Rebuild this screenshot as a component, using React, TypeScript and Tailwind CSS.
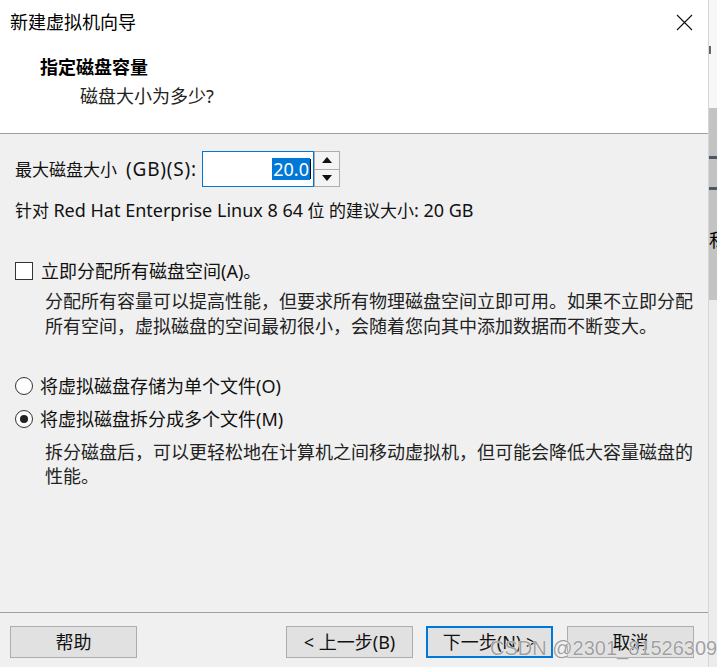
import React from "react";

const FONT = { fontFamily: '"Noto Sans", "Noto Sans CJK SC", sans-serif' };

function Btn({ children, primary }: { children: React.ReactNode; primary?: boolean }) {
  return (
    <div
      className={
        "w-[127px] h-[32px] flex items-center justify-center bg-[#e1e1e1] text-[18px] text-[#111] " +
        (primary ? "border-2 border-[#0078d7]" : "border border-[#adadad]")
      }
    >
      {children}
    </div>
  );
}

export default function App() {
  return (
    <div className="w-[717px] h-[667px] flex overflow-hidden relative" style={FONT}>
      <div className="w-[709px] h-full flex flex-col bg-[#f0f0f0] border-r border-[#d6d6d6]">
        {/* header */}
        <div className="h-[134px] bg-white border-b border-[#a0a0a0] flex flex-col pt-[10px] pl-[10px]">
          <div className="h-[24px] flex items-center justify-between pr-[15px]">
            <span className="text-[18px] leading-[24px] text-black">新建虚拟机向导</span>
            <svg width="17" height="17" viewBox="0 0 17 17">
              <path d="M1 1 L16 16 M16 1 L1 16" stroke="#111" strokeWidth="1.1" fill="none" />
            </svg>
          </div>
          <div className="mt-[21px] pl-[30px] text-[18px] leading-[24px] font-bold text-black">指定磁盘容量</div>
          <div className="mt-[5px] pl-[70px] text-[18px] leading-[24px] text-[#222]">磁盘大小为多少?</div>
        </div>

        {/* body */}
        <div className="flex-1 flex flex-col px-[15px] pt-[17px] text-[#111]">
          <div className="flex items-center h-[36px]">
            <div className="w-[187px] text-[17px] leading-[24px] whitespace-nowrap">
              最大磁盘大小<span className="ml-[9px] text-[19px] tracking-[0.8px]">(GB)(S):</span>
            </div>
            <div className="w-[112px] h-[36px] bg-white border border-[#0078d7] flex items-center justify-end pr-[2px]">
              <span className="bg-[#0078d7] text-white text-[18px] leading-[22px] px-[1px]">20.0</span>
              <span className="w-[1px] h-[20px] bg-black"></span>
            </div>
            <div className="w-[26px] h-[36px] flex flex-col border border-[#adadad] bg-[#f4f4f4]">
              <div className="flex-1 flex items-center justify-center border-b border-[#adadad]">
                <svg width="10" height="6" viewBox="0 0 10 6"><path d="M0 6 L5 0 L10 6 Z" fill="#111" /></svg>
              </div>
              <div className="flex-1 flex items-center justify-center">
                <svg width="10" height="6" viewBox="0 0 10 6"><path d="M0 0 L10 0 L5 6 Z" fill="#111" /></svg>
              </div>
            </div>
          </div>
          <div className="mt-[11px] text-[17px] leading-[24px] whitespace-nowrap">
            针对 <span className="text-[18px]">Red Hat Enterprise Linux 8 64</span> 位 的建议大小
            <span className="text-[18px]">: 20 GB</span>
          </div>

          <div className="mt-[36px] h-[24px] flex items-center">
            <div className="w-[18px] h-[18px] bg-white border border-[#333]"></div>
            <span className="ml-[8px] text-[18px] leading-[24px]">立即分配所有磁盘空间(A)。</span>
          </div>
          <div className="mt-[6px] pl-[30px] text-[18px] leading-[25px] whitespace-nowrap text-[#222]">
            分配所有容量可以提高性能，但要求所有物理磁盘空间立即可用。如果不立即分配
            <br />
            所有空间，虚拟磁盘的空间最初很小，会随着您向其中添加数据而不断变大。
          </div>

          <div className="mt-[35px] h-[24px] flex items-center">
            <div className="w-[18px] h-[18px] rounded-full bg-white border border-[#333]"></div>
            <span className="ml-[7px] text-[18px] leading-[24px]">将虚拟磁盘存储为单个文件(O)</span>
          </div>
          <div className="mt-[9px] h-[24px] flex items-center">
            <div className="w-[18px] h-[18px] rounded-full bg-white border border-[#333] flex items-center justify-center">
              <div className="w-[8px] h-[8px] rounded-full bg-[#222]"></div>
            </div>
            <span className="ml-[7px] text-[18px] leading-[24px]">将虚拟磁盘拆分成多个文件(M)</span>
          </div>
          <div className="mt-[9px] pl-[30px] text-[18px] leading-[24px] whitespace-nowrap text-[#222]">
            拆分磁盘后，可以更轻松地在计算机之间移动虚拟机，但可能会降低大容量磁盘的
            <br />
            性能。
          </div>
        </div>

        {/* footer */}
        <div className="border-t border-[#a0a0a0] pt-[13px] pb-[9px] pl-[10px] pr-[14px] flex items-center">
          <Btn>帮助</Btn>
          <div className="flex-1"></div>
          <Btn>&lt; 上一步(B)</Btn>
          <div className="w-[13px]"></div>
          <Btn primary>下一步(N) &gt;</Btn>
          <div className="w-[14px]"></div>
          <Btn>取消</Btn>
        </div>
      </div>

      {/* background strip */}
      <div className="w-[8px] h-full flex flex-col">
        <div className="h-[108px] bg-[#f7f7f7] flex flex-col pt-[46px]">
          <div className="w-[2px] h-[8px] bg-[#666]"></div>
        </div>
        <div className="h-[192px] bg-[#c3c3c3] flex flex-col pt-[48px] overflow-hidden">
          <div className="h-[3px] bg-[#4b5866]"></div>
          <div className="h-[28px]"></div>
          <div className="h-[3px] bg-[#4b5866]"></div>
          <div className="mt-[38px] text-[18px] leading-[24px] text-black whitespace-nowrap">私</div>
        </div>
        <div className="flex-1 bg-[#ececec]"></div>
      </div>

      {/* watermark */}
      <div
        className="absolute left-[490px] top-[636px] text-[20px] leading-[24px] text-[#a0a0a0] whitespace-nowrap"
        style={{ fontFamily: '"Liberation Sans", sans-serif', textShadow: "0 0 1px #fff, 0 0 1px #fff" }}
      >
        CSDN @2301_81526309
      </div>
    </div>
  );
}
